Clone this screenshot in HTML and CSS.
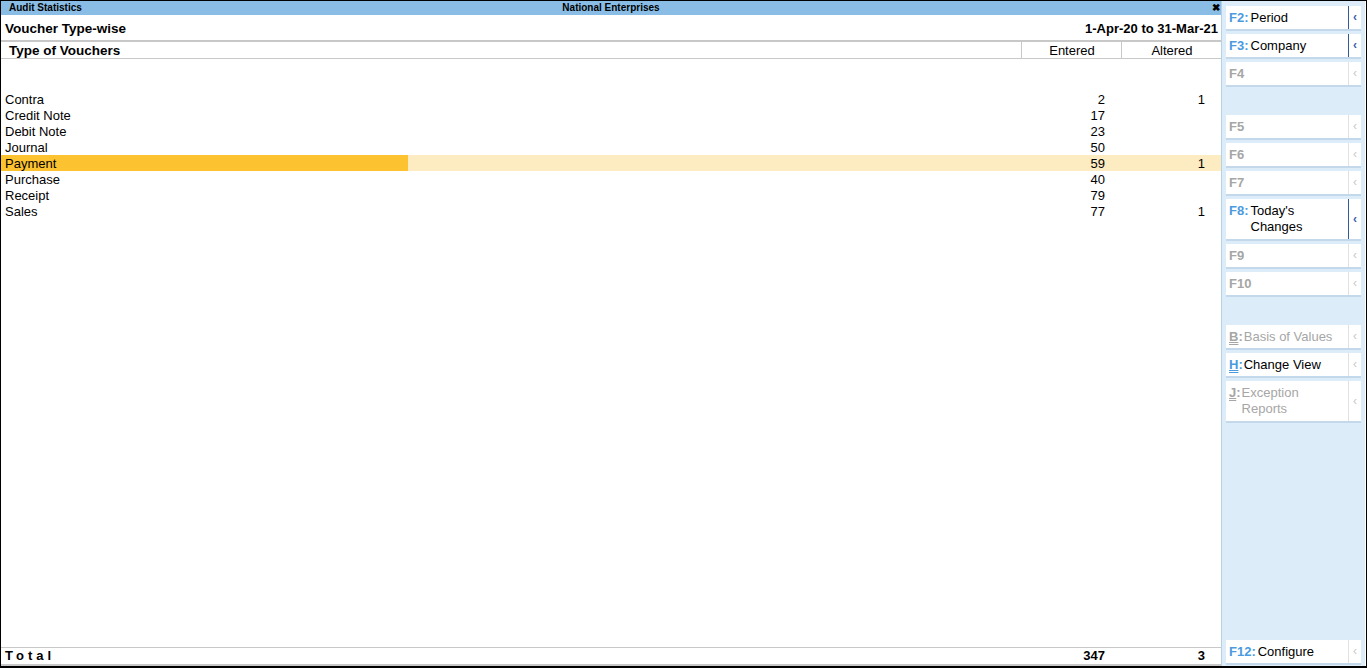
FILE: index.html
```html
<!DOCTYPE html>
<html lang="en">
<head>
    <meta charset="UTF-8">
    <title>Audit Statistics</title>
    <link rel="stylesheet" href="styles.css">
</head>
<body>
    <div class="frame">
        <!-- Report area -->
        <div class="report">
            <div class="title-bar">
                <span class="title-left">Audit Statistics</span>
                <span class="title-center">National Enterprises</span>
                <span class="title-close">&#10006;</span>
            </div>
            <div class="report-head">
                <span class="report-name">Voucher Type-wise</span>
                <span>1-Apr-20 to 31-Mar-21</span>
            </div>
            <div class="col-head">
                <div class="col-name">Type of Vouchers</div>
                <div class="col-num">Entered</div>
                <div class="col-num">Altered</div>
            </div>

            <div class="rows">
                <div class="row"><div class="cell-name">Contra</div><div class="cell-num">2</div><div class="cell-num">1</div></div>
                <div class="row"><div class="cell-name">Credit Note</div><div class="cell-num">17</div><div class="cell-num"></div></div>
                <div class="row"><div class="cell-name">Debit Note</div><div class="cell-num">23</div><div class="cell-num"></div></div>
                <div class="row"><div class="cell-name">Journal</div><div class="cell-num">50</div><div class="cell-num"></div></div>
                <div class="row selected"><div class="cell-name">Payment</div><div class="cell-num">59</div><div class="cell-num">1</div></div>
                <div class="row"><div class="cell-name">Purchase</div><div class="cell-num">40</div><div class="cell-num"></div></div>
                <div class="row"><div class="cell-name">Receipt</div><div class="cell-num">79</div><div class="cell-num"></div></div>
                <div class="row"><div class="cell-name">Sales</div><div class="cell-num">77</div><div class="cell-num">1</div></div>
            </div>

            <div class="total-row">
                <div class="cell-name">Total</div>
                <div class="cell-num">347</div>
                <div class="cell-num">3</div>
            </div>
        </div>

        <!-- Button bar -->
        <div class="buttons">
            <div class="btn"><span class="key">F2:</span><span class="label">Period</span><span class="arrow">&#8249;</span></div>
            <div class="btn"><span class="key">F3:</span><span class="label">Company</span><span class="arrow">&#8249;</span></div>
            <div class="btn off"><span class="key">F4</span><span class="label"></span><span class="arrow">&#8249;</span></div>
            <div class="spacer"></div>
            <div class="btn off"><span class="key">F5</span><span class="label"></span><span class="arrow">&#8249;</span></div>
            <div class="btn off"><span class="key">F6</span><span class="label"></span><span class="arrow">&#8249;</span></div>
            <div class="btn off"><span class="key">F7</span><span class="label"></span><span class="arrow">&#8249;</span></div>
            <div class="btn tall"><span class="key">F8:</span><span class="label">Today's<br>Changes</span><span class="arrow">&#8249;</span></div>
            <div class="btn off"><span class="key">F9</span><span class="label"></span><span class="arrow">&#8249;</span></div>
            <div class="btn off"><span class="key">F10</span><span class="label"></span><span class="arrow">&#8249;</span></div>
            <div class="spacer"></div>
            <div class="btn off letter"><span class="key"><u>B</u>:</span><span class="label">Basis of Values</span><span class="arrow">&#8249;</span></div>
            <div class="btn letter soft"><span class="key"><u>H</u>:</span><span class="label">Change View</span><span class="arrow">&#8249;</span></div>
            <div class="btn off letter tall"><span class="key"><u>J</u>:</span><span class="label">Exception<br>Reports</span><span class="arrow">&#8249;</span></div>
            <div class="fill"></div>
            <div class="btn soft last"><span class="key">F12:</span><span class="label">Configure</span><span class="arrow">&#8249;</span></div>
        </div>
    </div>
</body>
</html>
```

FILE: styles.css
```css
body {
    margin: 0;
    font-family: "Liberation Sans", Arial, sans-serif;
    font-size: 13px;
    color: #000;
    background-color: #fff;
}
.frame {
    display: flex;
    width: 1367px;
    height: 668px;
    box-sizing: border-box;
    border: 1px solid #000;
    border-bottom-width: 2px;
}
.report {
    width: 1220px;
    display: flex;
    flex-direction: column;
}
.title-bar {
    position: relative;
    height: 14px;
    background-color: #8abde6;
    font-size: 10px;
    font-weight: bold;
    line-height: 13px;
}
.title-left {
    position: absolute;
    left: 8px;
}
.title-center {
    position: absolute;
    left: 0;
    right: 0;
    text-align: center;
}
.title-close {
    position: absolute;
    right: 1px;
    top: 0;
    font-size: 10px;
}
.report-head {
    display: flex;
    justify-content: space-between;
    height: 25px;
    line-height: 27px;
    padding: 0 3px 0 4px;
    font-size: 13px;
    font-weight: bold;
    border-bottom: 2px solid #c8c8c8;
}
.report-name {
    font-size: 13.5px;
}
.col-head {
    display: flex;
    height: 16px;
    line-height: 18px;
    border-bottom: 1px solid #c8c8c8;
}
.col-head .col-name {
    flex: 1;
    padding-left: 8px;
    font-weight: bold;
    font-size: 13.5px;
}
.col-head .col-num {
    width: 98px;
    border-left: 1px solid #c8c8c8;
    text-align: center;
    padding-left: 1px;
}
.rows {
    flex: 1;
    padding-top: 32px;
}
.row, .total-row {
    display: flex;
    height: 16px;
    line-height: 17px;
}
.cell-name {
    flex: 1;
    padding-left: 4px;
}
.cell-num {
    width: 84px;
    padding-right: 16px;
    text-align: right;
}
.row.selected {
    background-color: #fdebc1;
}
.row.selected .cell-name {
    flex: 0 0 403px;
    margin-right: auto;
    background-color: #fcc22f;
}
.total-row {
    border-top: 1px solid #c8c8c8;
    border-bottom: 2px solid #c8c8c8;
    font-weight: bold;
    line-height: 16px;
}
.total-row .cell-name {
    letter-spacing: 4px;
}

/* right hand button bar */
.buttons {
    width: 144px;
    border-left: 1px solid #b9cfe2;
    background-color: #dcedf9;
    display: flex;
    flex-direction: column;
    padding: 5px 4px 0 4px;
    box-sizing: border-box;
}
.btn {
    display: flex;
    height: 23px;
    margin-bottom: 5px;
    background-color: #fff;
    box-shadow: 0 2px 0 #c3d8ea;
    line-height: 23px;
    flex-shrink: 0;
}
.btn.last {
    margin-bottom: 3px;
}
.btn.tall {
    height: 40px;
    line-height: 16px;
}
.btn.tall .key, .btn.tall .label {
    padding-top: 4px;
}
.key {
    padding-left: 3px;
    color: #4b9be0;
    font-weight: bold;
}
.label {
    flex: 1;
    padding-left: 2px;
}
.btn.letter .label {
    padding-left: 1px;
}
.key u {
    text-decoration-style: double;
}
.arrow {
    width: 12px;
    border-left: 1px solid #36599b;
    color: #3a60b0;
    text-align: center;
    font-size: 12px;
    font-weight: bold;
    align-self: stretch;
    display: flex;
    align-items: center;
    justify-content: center;
}
.btn.soft .arrow {
    border-left-color: #e2e2e2;
    color: #c8c8c8;
    font-weight: normal;
}
.btn.off .key, .btn.off .label {
    color: #a6a6a6;
}
.btn.off .arrow {
    border-left-color: #e2e2e2;
    color: #c8c8c8;
    font-weight: normal;
}
.spacer {
    height: 25px;
    flex-shrink: 0;
}
.fill {
    flex: 1;
}
```
